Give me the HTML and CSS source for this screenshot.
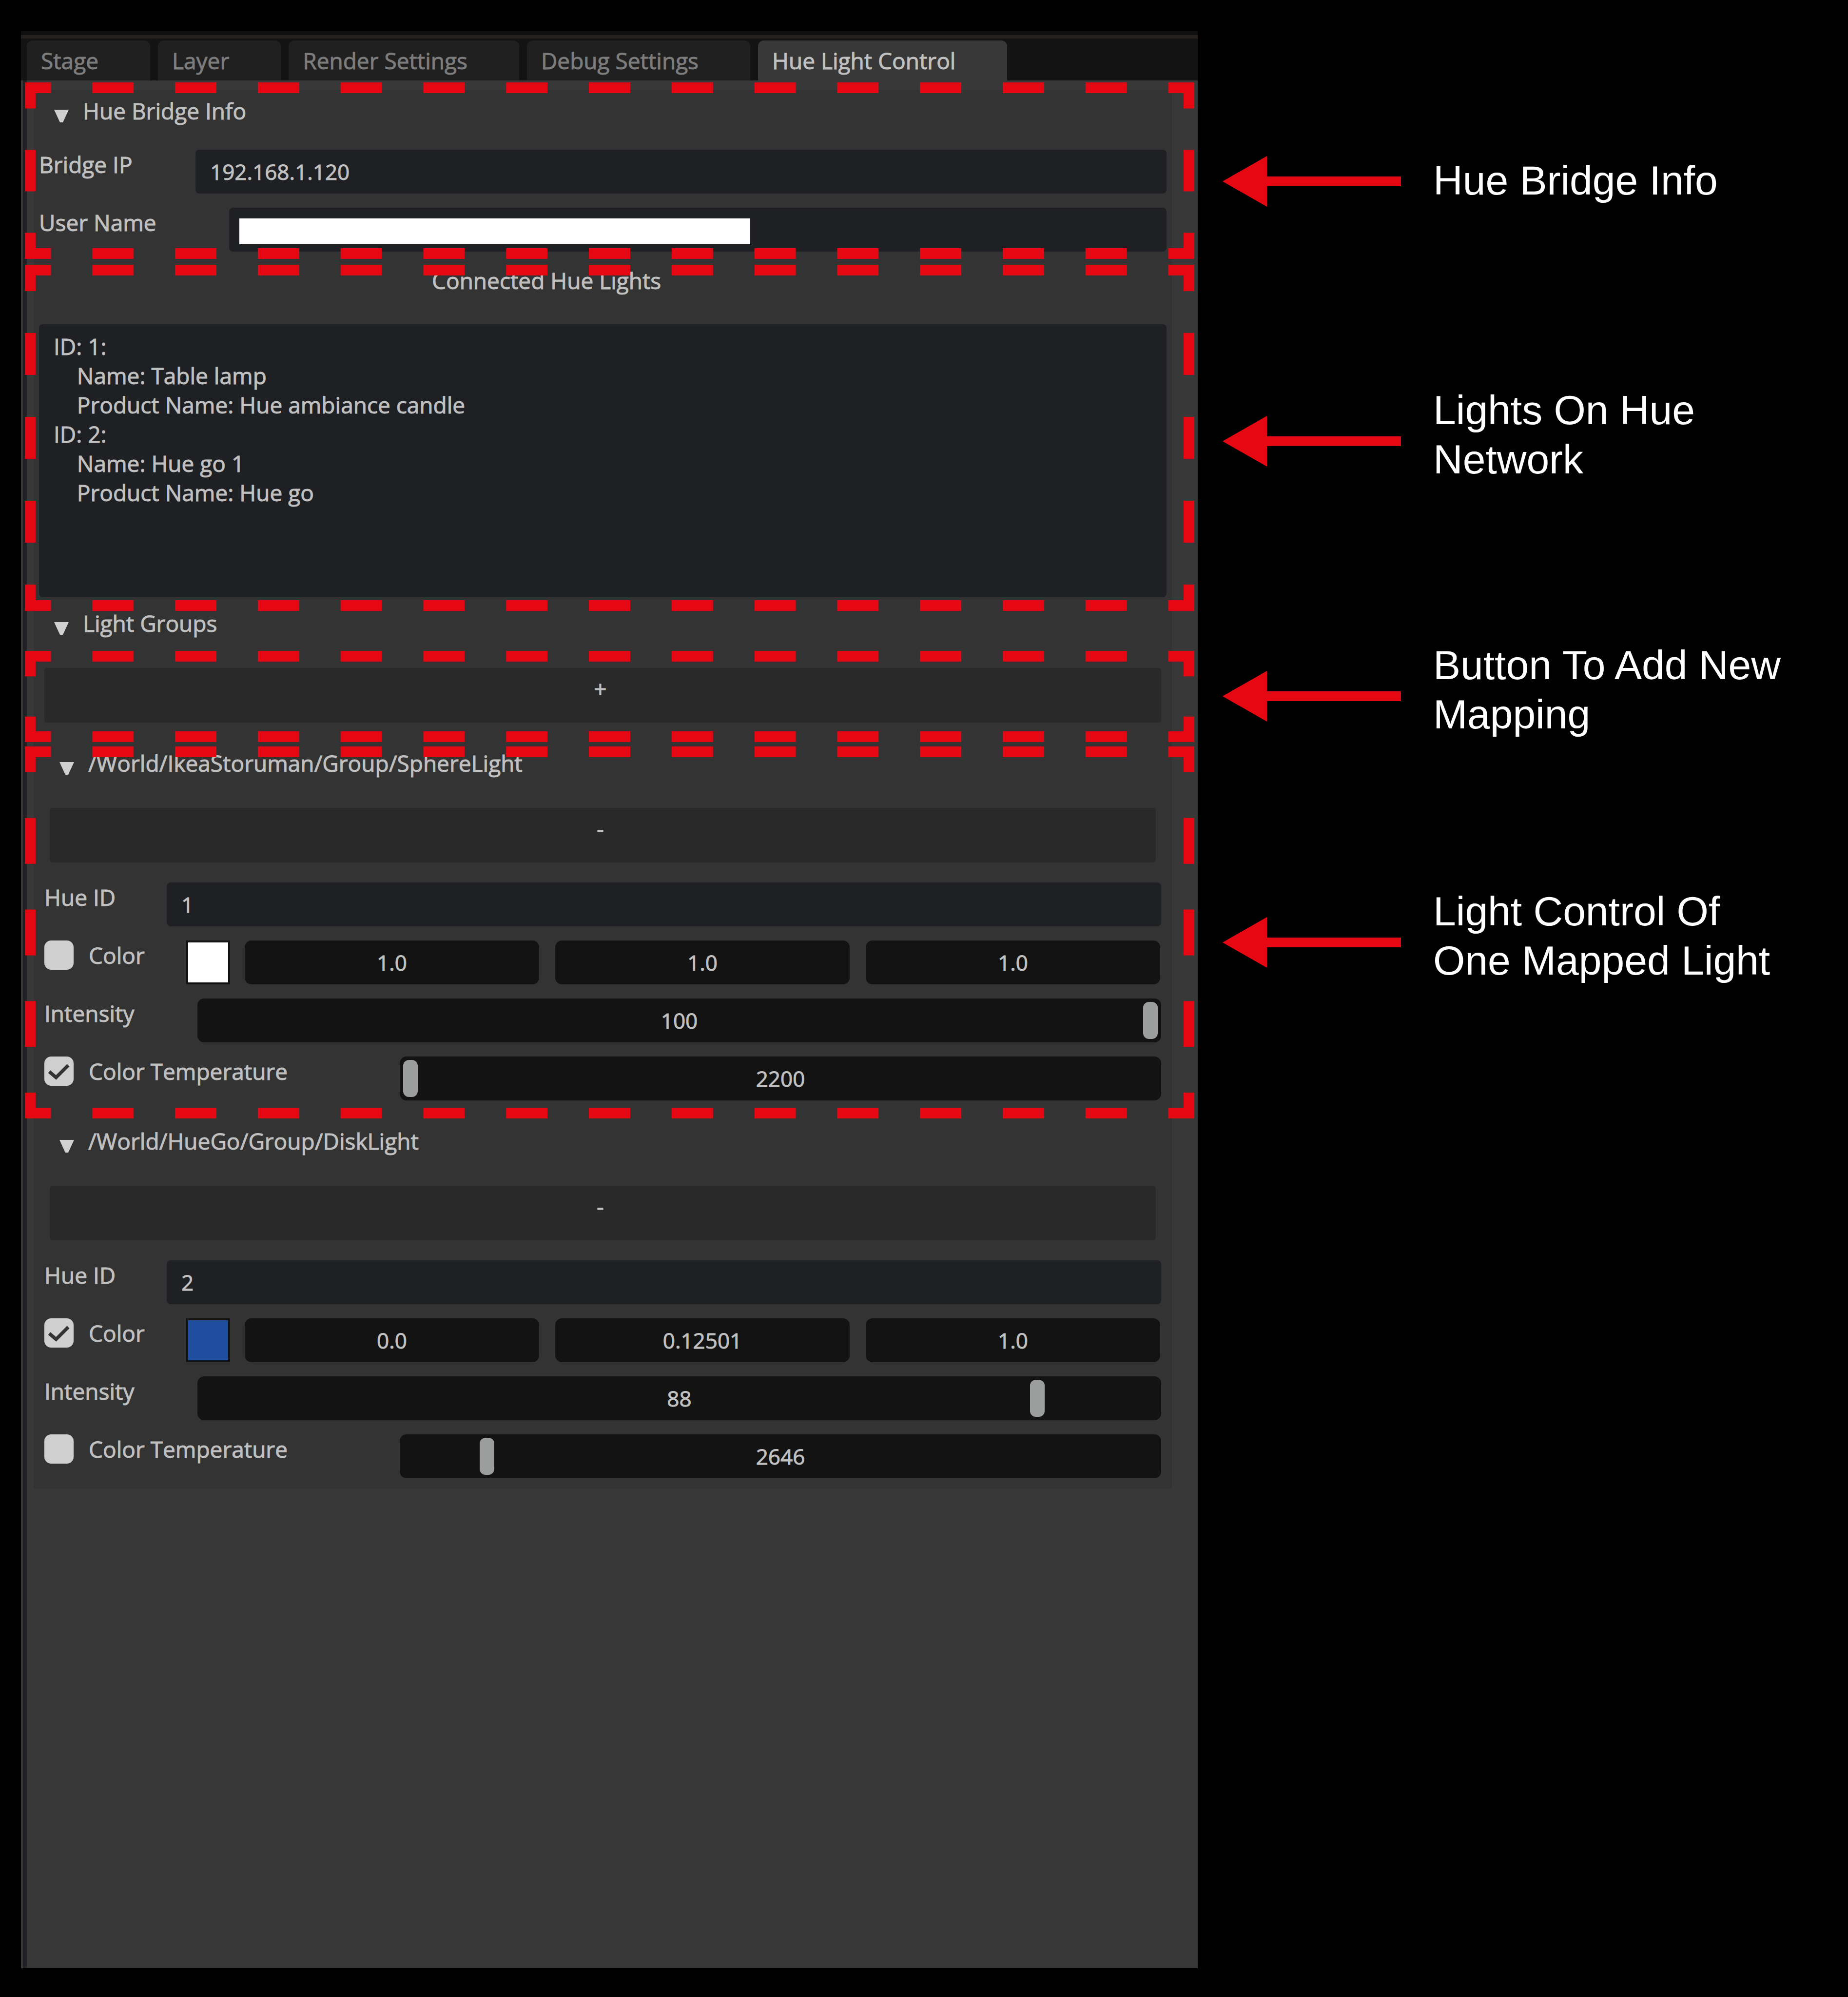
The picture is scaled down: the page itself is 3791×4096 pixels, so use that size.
FILE: index.html
```html
<!DOCTYPE html>
<html lang="en">
<head>
<meta charset="utf-8">
<title>Hue Light Control</title>
<link rel="stylesheet" href="styles.css">
</head>
<body>
<main class="page">
  <div class="panel">
    <div class="topline"></div>
    <nav class="tabs" role="tablist">
      <button class="tab" role="tab">Stage</button>
      <button class="tab" role="tab">Layer</button>
      <button class="tab" role="tab">Render Settings</button>
      <button class="tab" role="tab">Debug Settings</button>
      <button class="tab tab-active" role="tab" aria-selected="true">Hue Light Control</button>
    </nav>
    <div class="body">
      <div class="content">
        <section class="bridge">
          <button class="heading"><svg class="tri" viewBox="0 0 30 26"><path d="M0 0H30L18 26H12Z"/></svg>Hue Bridge Info</button>
          <div class="row row-ip">
            <label class="name" for="ip">Bridge IP</label>
            <input class="field" id="ip" type="text" value="192.168.1.120">
          </div>
          <div class="row row-user">
            <label class="name" for="user">User Name</label>
            <div class="field masked"><input class="mask" id="user" type="text"></div>
          </div>
          <svg class="frame frame-bridge">
            <line x2="100%" pathLength="28"/><line y1="100%" x2="100%" y2="100%" pathLength="28"/>
            <line y2="100%" pathLength="4"/><line x1="100%" x2="100%" y2="100%" pathLength="4"/>
            <g class="corners"><line/><line x1="100%" x2="100%"/><line y1="100%" y2="100%"/><line x1="100%" y1="100%" x2="100%" y2="100%"/></g>
          </svg>
        </section>

        <section class="lights">
          <label class="caption" for="lights">Connected Hue Lights</label>
          <textarea class="list" id="lights" spellcheck="false">ID: 1:
    Name: Table lamp
    Product Name: Hue ambiance candle
ID: 2:
    Name: Hue go 1
    Product Name: Hue go</textarea>
          <svg class="frame frame-lights">
            <line x2="100%" pathLength="28"/><line y1="100%" x2="100%" y2="100%" pathLength="28"/>
            <line y2="100%" pathLength="8"/><line x1="100%" x2="100%" y2="100%" pathLength="8"/>
            <g class="corners"><line/><line x1="100%" x2="100%"/><line y1="100%" y2="100%"/><line x1="100%" y1="100%" x2="100%" y2="100%"/></g>
          </svg>
        </section>

        <button class="heading heading-groups"><svg class="tri" viewBox="0 0 30 26"><path d="M0 0H30L18 26H12Z"/></svg>Light Groups</button>

        <section class="add">
          <button class="bar">+</button>
          <svg class="frame frame-add">
            <line x2="100%" pathLength="28"/><line y1="100%" x2="100%" y2="100%" pathLength="28"/>
            <line y2="100%" pathLength="2"/><line x1="100%" x2="100%" y2="100%" pathLength="2"/>
            <g class="corners"><line/><line x1="100%" x2="100%"/><line y1="100%" y2="100%"/><line x1="100%" y1="100%" x2="100%" y2="100%"/></g>
          </svg>
        </section>

        <section class="group">
          <button class="heading"><svg class="tri" viewBox="0 0 30 26"><path d="M0 0H30L18 26H12Z"/></svg>/World/IkeaStoruman/Group/SphereLight</button>
          <div class="remove"><button class="bar">-</button></div>
          <div class="rows">
            <div class="row row-id">
              <label class="name" for="id1">Hue ID</label>
              <input class="field" id="id1" type="text" value="1">
            </div>
            <div class="row row-color">
              <label class="check"><input class="box" type="checkbox">Color</label>
              <button class="swatch white" aria-label="Pick color"></button>
              <div class="rgb">
                <input class="num" type="text" value="1.0" aria-label="Red">
                <input class="num" type="text" value="1.0" aria-label="Green">
                <input class="num" type="text" value="1.0" aria-label="Blue">
              </div>
            </div>
            <div class="row row-intensity">
              <label class="name" for="int1">Intensity</label>
              <div class="slider"><input class="range" id="int1" type="range" min="0" max="100" value="100"><output class="value" for="int1">100</output></div>
            </div>
            <div class="row row-temp">
              <label class="check"><input class="box" type="checkbox" checked>Color Temperature</label>
              <div class="slider"><input class="range" id="temp1" type="range" min="2200" max="6500" value="2200" aria-label="Color Temperature"><output class="value" for="temp1">2200</output></div>
            </div>
          </div>
          <svg class="frame frame-group">
            <line x2="100%" pathLength="28"/><line y1="100%" x2="100%" y2="100%" pathLength="28"/>
            <line class="side" y2="100%" pathLength="742"/><line class="side" x1="100%" x2="100%" y2="100%" pathLength="742"/>
            <g class="corners"><line/><line x1="100%" x2="100%"/><line y1="100%" y2="100%"/><line x1="100%" y1="100%" x2="100%" y2="100%"/></g>
          </svg>
        </section>

        <section class="group">
          <button class="heading"><svg class="tri" viewBox="0 0 30 26"><path d="M0 0H30L18 26H12Z"/></svg>/World/HueGo/Group/DiskLight</button>
          <div class="remove"><button class="bar">-</button></div>
          <div class="rows">
            <div class="row row-id">
              <label class="name" for="id2">Hue ID</label>
              <input class="field" id="id2" type="text" value="2">
            </div>
            <div class="row row-color">
              <label class="check"><input class="box" type="checkbox" checked>Color</label>
              <button class="swatch blue" aria-label="Pick color"></button>
              <div class="rgb">
                <input class="num" type="text" value="0.0" aria-label="Red">
                <input class="num" type="text" value="0.12501" aria-label="Green">
                <input class="num" type="text" value="1.0" aria-label="Blue">
              </div>
            </div>
            <div class="row row-intensity">
              <label class="name" for="int2">Intensity</label>
              <div class="slider"><input class="range" id="int2" type="range" min="0" max="100" value="88"><output class="value" for="int2">88</output></div>
            </div>
            <div class="row row-temp">
              <label class="check"><input class="box" type="checkbox">Color Temperature</label>
              <div class="slider"><input class="range" id="temp2" type="range" min="2200" max="6500" value="2646" aria-label="Color Temperature"><output class="value" for="temp2">2646</output></div>
            </div>
          </div>
        </section>
      </div>
    </div>
  </div>

  <aside class="notes">
    <div class="note note-bridge"><svg class="arrow" viewBox="0 0 366 104"><path d="M0 52L91 0V42H366V62H91V104Z"/></svg><p class="text">Hue Bridge Info</p></div>
    <div class="note note-lights"><svg class="arrow" viewBox="0 0 366 104"><path d="M0 52L91 0V42H366V62H91V104Z"/></svg><p class="text">Lights On Hue<br>Network</p></div>
    <div class="note note-add"><svg class="arrow" viewBox="0 0 366 104"><path d="M0 52L91 0V42H366V62H91V104Z"/></svg><p class="text">Button To Add New<br>Mapping</p></div>
    <div class="note note-group"><svg class="arrow" viewBox="0 0 366 104"><path d="M0 52L91 0V42H366V62H91V104Z"/></svg><p class="text">Light Control Of<br>One Mapped Light</p></div>
  </aside>
</main>
</body>
</html>
```
FILE: styles.css
```css
* { box-sizing: border-box; }
body { margin: 0; background: #000; color: #c0c0c0; font: 46px/60px "Open Sans", "Noto Sans", sans-serif; }
button, input, textarea { font: inherit; color: inherit; border: 0; margin: 0; padding: 0; background: none; display: block; }
button { text-align: left; cursor: pointer; }

.page { display: grid; grid-template-columns: minmax(0, 2457fr) minmax(0, 1334fr); min-height: 100vh; padding: 64px 0 59px; }
.panel { display: flex; flex-direction: column; margin-left: 43px; background: #383838; -webkit-text-stroke: 1px; }
.topline { height: 15px; background: #25211e; border-top: 8px solid #0f0f0f; }
.tabs { display: flex; gap: 16px; height: 86px; padding: 4px 0 0 12px; background: #131313; }
.tab { padding: 0 106px 0 29px; background: #202020; color: #7c7c7c; border-radius: 12px 12px 0 0; white-space: nowrap; }
.tab-active { background: #383838; color: #c0c0c0; }

.body { flex: 1; padding: 19px 53px 0 14px; border-left: 4px solid #38383a; box-shadow: inset 8px 0 #202024; }
.content { padding-bottom: 22px; margin-left: 8px; background: #333; }

.heading { display: flex; align-items: center; gap: 29px; height: 60px; white-space: nowrap; }
.tri { width: 30px; height: 26px; margin-top: 22px; fill: #d0d0d0; stroke: none; }

.row { display: flex; height: 90px; }
.name { white-space: nowrap; }
.field { flex: 1; min-width: 0; height: 90px; padding: 0 30px; background: #1f2024; border-radius: 8px; font-size: 44px; }

.bridge { position: relative; padding: 13px 11px 0; }
.bridge .heading { margin: 0 0 50px 31px; }
.row-ip .name { flex: 0 0 321px; }
.row-ip { margin-bottom: 29px; }
.row-user .name { flex: 0 0 390px; }
.masked { padding: 22px 21px 15px; }
.mask { width: 1048px; max-width: 100%; height: 53px; background: #fff; color: #fff; }

.lights { position: relative; padding: 29px 11px 0; }
.caption { display: block; margin: 0 0 60px 806px; }
.list { width: 100%; height: 560px; padding: 15px 30px; background: #1f2024; border-radius: 8px; resize: none; overflow: hidden; white-space: pre; }

.heading-groups { margin: 23px 0 0 42px; }
.add { position: relative; padding: 62px 22px 0; }
.bar { display: flex; justify-content: center; width: 100%; height: 112px; padding: 12px 10px 0 0; background: #292929; border-radius: 6px; }

.group { position: relative; padding-top: 53px; }
.group .heading { margin-left: 53px; }
.remove { padding: 62px 33px 41px; }
.rows { display: grid; row-gap: 29px; padding: 0 22px; }

.row-id .name { flex: 0 0 251px; }
.row-color .check { flex: 0 0 291px; }
.row-intensity .name { flex: 0 0 314px; }
.row-temp .check { flex: 0 0 729px; }

.check { display: flex; gap: 31px; white-space: nowrap; }
.box { appearance: none; width: 60px; height: 60px; border-radius: 14px; background: #cfcfcf; }
.box:checked { background: #cfcfcf url("data:image/svg+xml,%3Csvg xmlns='http://www.w3.org/2000/svg' viewBox='0 0 60 60'%3E%3Cpath d='M10 31L24 43L49 18' fill='none' stroke='%23333' stroke-width='7'/%3E%3C/svg%3E"); }
.swatch { flex: 0 0 90px; height: 90px; border: 4px solid #131313; }
.white { background: #fff; }
.blue { background: #1f4e9e; }
.rgb { flex: 1; display: grid; grid-template-columns: repeat(3, minmax(0, 1fr)); gap: 33px; padding: 0 2px 0 30px; }
.num { width: 100%; height: 90px; text-align: center; background: #131313; border-radius: 14px; font-size: 44px; }

.slider { position: relative; flex: 1; height: 90px; padding: 7px; background: #131313; border-radius: 14px; font-size: 44px; }
.range { appearance: none; width: 100%; height: 76px; }
.range::-webkit-slider-thumb { appearance: none; width: 30px; height: 76px; border-radius: 12px; background: #9c9e9d; }
.range::-moz-range-thumb { width: 30px; height: 76px; border: 0; border-radius: 12px; background: #9c9e9d; }
.value { position: absolute; inset: 15px 0 auto; text-align: center; pointer-events: none; }

.frame { position: absolute; left: -7px; width: calc(100% + 42px); overflow: visible; pointer-events: none; stroke: #e50813; stroke-width: 22; stroke-dasharray: 1 1; stroke-dashoffset: 0.5; }
.frame .side { stroke-dasharray: 42 94 94 94 94 94 94 94 42 0; stroke-dashoffset: 0; }
.corners { stroke-dasharray: none; stroke-linecap: square; }
.frame-bridge { top: -4px; height: 340px; }
.frame-lights { top: 38px; height: 688px; }
.frame-add { top: 38px; height: 165px; }
.frame-group { top: 60px; height: 741px; }

.notes { padding: 256px 0 0 51px; color: #fff; font: 84px/101px "Liberation Sans", Arial, sans-serif; }
.note { display: flex; gap: 66px; }
.arrow { flex: none; width: 366px; height: 104px; margin-top: 62px; fill: #e50813; }
.note-bridge .arrow { margin-top: 0; }
.note-lights { margin-top: 367px; }
.note-add { margin-top: 321px; }
.note-group { margin-top: 303px; }
.text { margin: 0; white-space: nowrap; }
```
